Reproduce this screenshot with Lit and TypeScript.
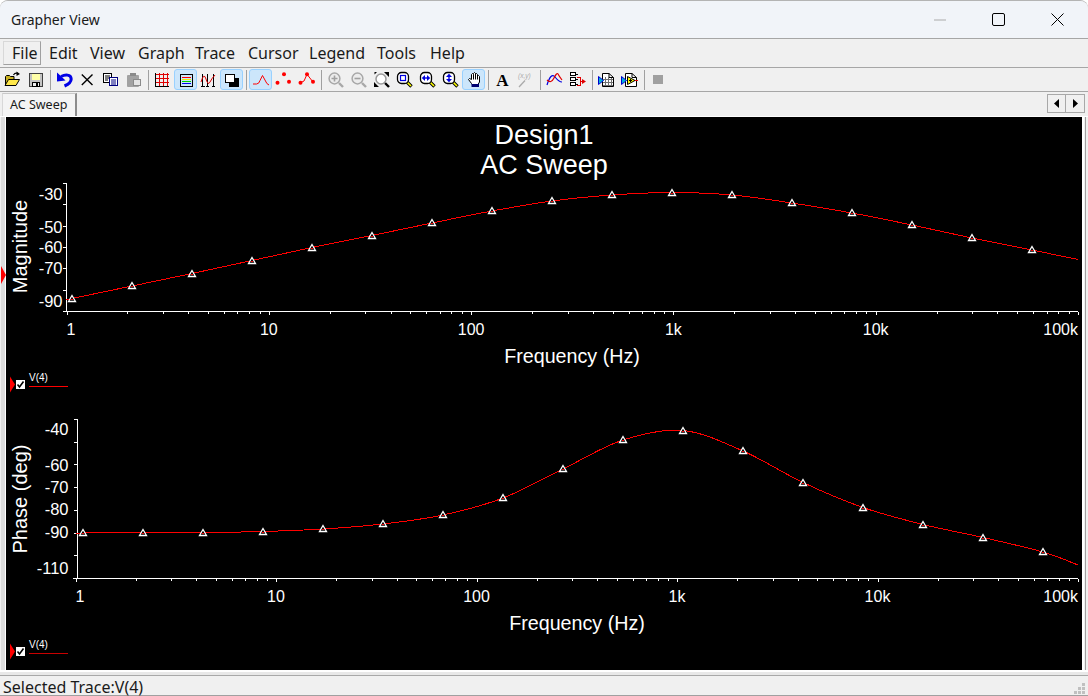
import { LitElement, html, css, svg } from "lit";
import { customElement } from "lit/decorators.js";

type Pt = [number, number];

const curve = (pts: Pt[]) => {
  let d = `M${pts[0][0]} ${pts[0][1]}`;
  for (let i = 0; i < pts.length - 1; i++) {
    const p0 = pts[Math.max(i - 1, 0)], p1 = pts[i], p2 = pts[i + 1], p3 = pts[Math.min(i + 2, pts.length - 1)];
    d += ` C${p1[0] + (p2[0] - p0[0]) / 6} ${p1[1] + (p2[1] - p0[1]) / 6} ${p2[0] - (p3[0] - p1[0]) / 6} ${p2[1] - (p3[1] - p1[1]) / 6} ${p2[0]} ${p2[1]}`;
  }
  return d;
};

const DOC = svg`<path d="M4.5 2.5H11L15.5 6.5V15.5H4.5Z" fill="#fff" stroke="#000"/><path d="M11 2.5V6.5H15.5" fill="none" stroke="#000"/>`;
const TRI = svg`<path d="M.5 5.5V13.5L5.5 9.5Z" fill="#00b4d8" stroke="#0000d0"/>`;
const LENS = svg`<path d="M11 11L15.5 15.5" stroke="#000" stroke-width="3.4"/><path d="M11.5 11.5L15 15" stroke="#ffff00" stroke-width="1.6"/><rect x="1.5" y="1.5" width="11" height="11" rx="4" fill="#fff" stroke="#000" stroke-width="1.3"/>`;

const ICONS: Record<string, unknown> = {
  open: svg`<path d="M1.5 14V5.5L2.5 4.5H5.5L6.5 5.5H10V8" fill="#c8b020" stroke="#000"/><path d="M1 14.5L4.5 8.5H15.5L12 14.5Z" fill="#ffe84a" stroke="#000"/><path d="M9.5 4Q11 1.5 14 2.5" fill="none" stroke="#000" stroke-width="1.2"/><path d="M12.5 .5L16 3L12.5 5Z"/>`,
  save: svg`<rect x="2.5" y="2.5" width="13" height="13" fill="#c4c4c4" stroke="#404040"/><rect x="5" y="3" width="8" height="6" fill="#ffffa8"/><rect x="5.5" y="11.5" width="7" height="4" fill="#eee" stroke="#000"/><rect x="9" y="12" width="2" height="3"/>`,
  undo: svg`<path d="M5 5.5C9 3.5 15 3 15.2 8C15.2 11.5 12 13.5 8.5 15" fill="none" stroke="#0000e6" stroke-width="3"/><path d="M1 1.5V10.5L9.5 9.5Z" fill="#0000e6"/>`,
  cut: svg`<path d="M2.8 3.5L13.5 14M13.5 3.5L2.8 14" fill="none" stroke="#000" stroke-width="1.4"/>`,
  copy: svg`<rect x="1.5" y="2.5" width="8" height="9" fill="#fff" stroke="#000"/><path d="M3 5H8M3 7H8M3 9H6" stroke="#000"/><rect x="7.5" y="6.5" width="8" height="8" fill="#fff" stroke="#000080"/><path d="M9 9H14M9 11H14M9 13H14" stroke="#000080"/>`,
  paste: svg`<rect x="2" y="4" width="12" height="12" rx="1" fill="#a2a2a2"/><rect x="5" y="2" width="6" height="3" fill="#8a8a8a"/><rect x="8.5" y="8.5" width="7" height="6" fill="#e4e4e4" stroke="#8a8a8a"/>`,
  grid: svg`<g shape-rendering="crispEdges"><path d="M5.5 2V15M9.5 2V15M13.5 2V15M2 3.5H15M2 7.5H15M2 11.5H15" stroke="#e00000"/><path d="M1.5 2V15.5H15" fill="none" stroke="#000"/></g>`,
  legend: svg`<g shape-rendering="crispEdges"><rect x="3.5" y="3.5" width="12" height="12" fill="none" stroke="#000"/><path d="M5 6.5H14" stroke="#f00"/><path d="M5 8.5H14" stroke="#f0f000"/><path d="M5 10.5H14" stroke="#00d000"/><path d="M5 12.5H14" stroke="#0000f0"/></g>`,
  traces: svg`<g shape-rendering="crispEdges"><path d="M2.5 3V15M7.5 3V15M13.5 3V15M1 15.5H5M6 15.5H9M12 15.5H15" stroke="#000"/></g><path d="M1 11Q4 1 6 8T10 11T15 4" fill="none" stroke="#e00000"/>`,
  invert: svg`<g shape-rendering="crispEdges"><rect x="6" y="7" width="10" height="9"/><rect x="2.5" y="3.5" width="9" height="8" fill="#fff" stroke="#000"/></g>`,
  peak: svg`<path d="M1 13H4.5Q7 13 8 9.5L10.5 4.5L13.5 10Q14.5 13 17 14" fill="none" stroke="#f00"/>`,
  dots: svg`<g fill="#f00"><circle cx="2.5" cy="11.7" r="2"/><circle cx="9" cy="3.3" r="2"/><circle cx="14" cy="10.8" r="2"/></g>`,
  peakdots: svg`<path d="M2.5 11.7L6 10L9 3.3L15 11" fill="none" stroke="#f00"/><g fill="#f00"><circle cx="2.5" cy="11.7" r="2"/><circle cx="9" cy="3.3" r="2"/><circle cx="15" cy="10.8" r="2"/></g>`,
  zin: svg`<path d="M12 12L16 16" stroke="#a8a8a8" stroke-width="2.4"/><circle cx="7.5" cy="7.5" r="5.4" fill="#ececec" stroke="#a8a8a8" stroke-width="1.5"/><path d="M4.5 7.5H10.5M7.5 4.5V10.5" stroke="#a0a0a0" stroke-width="1.6"/>`,
  zout: svg`<path d="M12 12L16 16" stroke="#a8a8a8" stroke-width="2.4"/><circle cx="7.5" cy="7.5" r="5.4" fill="#ececec" stroke="#a8a8a8" stroke-width="1.5"/><path d="M4.5 7.5H10.5" stroke="#a0a0a0" stroke-width="1.6"/>`,
  zfit: svg`<path d="M11 1H16V6ZM1 11V16H6ZM1.5 1H4L1.5 3.5Z"/><path d="M12 12L16 16" stroke="#000" stroke-width="2.4"/><circle cx="8" cy="8" r="5" fill="#fff" stroke="#999" stroke-width="1.5"/>`,
  zbox: svg`${LENS}<rect x="4.5" y="4.5" width="5" height="5" fill="none" stroke="#0000e0" stroke-width="1.2"/>`,
  zh: svg`${LENS}<path d="M5 7H9" stroke="#0000e0" stroke-width="1.4"/><path d="M6 4V10L2.8 7ZM8 4V10L11.2 7Z" fill="#0000e0"/>`,
  zv: svg`${LENS}<path d="M7 5V9" stroke="#0000e0" stroke-width="1.4"/><path d="M4 6H10L7 2.8ZM4 8H10L7 11.2Z" fill="#0000e0"/>`,
  hand: svg`<path d="M6.5 12.5L3.5 8.5L4.5 7.5L6.5 8.5V3.5L7.5 2.5L8.5 3.5V2.5L9.5 1.5L10.5 2.5V3.5L11.5 2.5L12.5 3.5V5L13.5 4.5L14.5 5.5V11L13 13.5H7Z" fill="#fff" stroke="#000"/><path d="M8.5 3.5V8.5M10.5 2.5V8.5M12.5 4V8.5" stroke="#000" fill="none"/><rect x="6.5" y="13" width="7.5" height="3" fill="#000070"/>`,
  text: svg`<text class="gA" x="8.5" y="14.5" text-anchor="middle">A</text>`,
  xy: svg`<text class="gxy" x="1" y="6.5">(x,y)</text><path d="M2 16L8 9.5" stroke="#aaa" stroke-width="1.3"/>`,
  wave: svg`<path d="M1 14Q5 1 9 6T16 11" fill="none" stroke="#0000e0" stroke-width="1.2"/><path d="M1 9Q5 13 8 7T12 3T16 9" fill="none" stroke="#e00000" stroke-width="1.2"/>`,
  merge: svg`<g shape-rendering="crispEdges"><rect x="1.5" y="1.5" width="5" height="3" fill="#fff" stroke="#000"/><rect x="1.5" y="6.5" width="5" height="3" fill="#fff" stroke="#000"/><rect x="1.5" y="11.5" width="5" height="3" fill="#fff" stroke="#000"/><path d="M7 3H9M7 8H9M7 13H9" stroke="#000"/><path d="M8 6.5H11.5V14.5H8M11.5 10.5H14" fill="none" stroke="#e00000"/></g><path d="M13 8L17 10.5L13 13Z" fill="#e00000"/>`,
  griddoc: svg`${DOC}<g shape-rendering="crispEdges"><path d="M7.5 6V15M10.5 6V15M13.5 7V15M5 8.5H15M5 11.5H15M5 14H15" stroke="#707070"/></g>${TRI}`,
  opdoc: svg`${DOC}${TRI}<path d="M6.5 5.5V13.5L14 9.5Z" fill="#ffff00" stroke="#000"/><path d="M14 9.5H17" stroke="#e00000"/><path d="M8 9.5H11M9.5 8V11" stroke="#000"/>`,
  stop: svg`<rect x="3" y="4" width="10" height="9" fill="#a0a0a0"/>`,
};

const TOOLS: string[] = [
  "open", "save", "|", "undo", "cut", "copy", "paste", "|", "grid", "*legend", "traces", "*invert", "|",
  "*peak", "dots", "peakdots", "|", "zin", "zout", "zfit", "zbox", "zh", "zv", "*hand", "|", "text", "xy", "|",
  "wave", "merge", "|", "griddoc", "opdoc", "|", "stop",
];

const MENUS: [string, number][] = [["File", 38], ["Edit", 41], ["View", 48], ["Graph", 57], ["Trace", 53], ["Cursor", 61], ["Legend", 68], ["Tools", 53], ["Help", 48]];

const XL = ["1", "10", "100", "1k", "10k", "100k"];

interface Plot {
  x0: number; x1: number; axisX: number; top: number; bottom: number; step: number;
  yLabels: [string, number][]; yRight: number; xBase: number; yTitle: string; yTitleY: number;
  fx: number; fy: number; trace: Pt[]; marks: Pt[];
}

const PLOTS: Plot[] = [
  {
    x0: 66.5, x1: 1078, axisX: 66.5, top: 183.5, bottom: 311.5, step: 21.33,
    yLabels: [["-30", 200], ["-50", 232.5], ["-60", 253], ["-70", 274], ["-90", 306.5]], yRight: 62.5,
    xBase: 335, yTitle: "Magnitude", yTitleY: 246.5, fx: 572, fy: 363,
    trace: [[67, 300], [72, 298.5], [132, 286], [192, 273.5], [252, 260.5], [312, 247.5], [372, 235.5], [432, 223], [492, 211], [552, 201], [612, 195], [672, 192.5], [732, 195], [792, 203], [852, 213], [912, 225], [972, 238], [1032, 250], [1078, 259.5]],
    marks: [[72, 298.5], [132, 286], [192, 273.5], [252, 260.5], [312, 247.5], [372, 235.5], [432, 223], [492, 211], [552, 201], [612, 195], [672, 192.5], [732, 195], [792, 203], [852, 213], [912, 225], [972, 238], [1032, 250]],
  },
  {
    x0: 75.5, x1: 1078, axisX: 77.5, top: 419.5, bottom: 578.5, step: 22.71,
    yLabels: [["-40", 435], ["-60", 470.5], ["-70", 493], ["-80", 515], ["-90", 538], ["-110", 574]], yRight: 68.5,
    xBase: 602, yTitle: "Phase (deg)", yTitleY: 499, fx: 577, fy: 630,
    trace: [[77, 533], [83, 533], [143, 532.5], [203, 532.5], [263, 531.5], [323, 529], [383, 524], [443, 515], [503, 498], [563, 469], [623, 440], [683, 430.5], [743, 451], [803, 482.5], [863, 507.5], [923, 524.5], [983, 537.5], [1043, 552], [1078, 565]],
    marks: [[83, 533], [143, 532.5], [203, 532.5], [263, 531.5], [323, 529], [383, 524], [443, 515], [503, 498], [563, 469], [623, 440], [683, 430.5], [743, 451], [803, 482.5], [863, 507.5], [923, 524.5], [983, 537.5], [1043, 552]],
  },
];

const LEGENDS = [{ y: 376.5, label: 381, line: 386.5, box: 380, dim: false }, { y: 643.5, label: 648, line: 653.5, box: 647, dim: true }];

@customElement("app-root")
export class AppRoot extends LitElement {
  static styles = css`
    :host { display: block; width: 1088px; height: 696px; overflow: hidden; background: #fff; font-family: "Noto Sans", sans-serif; color: #1a1a1a; }
    .win { height: 696px; display: flex; flex-direction: column; position: relative; background: #f0f0f0; border-radius: 8px 8px 0 0; box-sizing: border-box; border-top: 1px solid #b4b4b4; border-bottom: 1px solid #a0a0a0; }
    .title { height: 37px; flex: none; display: flex; align-items: center; background: #f1f4f9; border-radius: 8px 8px 0 0; border-bottom: 1px solid #a6a6a6; padding-left: 11px; font-size: 14px; }
    .title span { flex: 1; }
    .wc { width: 59px; height: 37px; display: flex; align-items: center; justify-content: center; }
    .wc svg { display: block; }
    .wc.last { margin-right: 1px; }
    .menu { height: 28px; flex: none; display: flex; align-items: center; padding-left: 3px; border-bottom: 1px solid #a6a6a6; font-size: 16px; }
    .mi { box-sizing: border-box; height: 24px; padding-left: 8px; line-height: 23px; white-space: nowrap; border: 1px solid transparent; border-left-width: 0; }
    .mi.on { border: 1px solid; border-color: #d8d8d8 #a0a0a0 #a0a0a0 #d8d8d8; }
    .tools { height: 23px; flex: none; display: flex; align-items: center; padding-left: 1px; border-bottom: 1px solid #a6a6a6; }
    .tb { box-sizing: border-box; width: 23px; height: 21px; display: flex; align-items: center; justify-content: center; border: 1px solid transparent; border-radius: 3px; }
    .tb.on { background: #cce6fb; border-color: #99d1ff; }
    .tb svg { width: 17px; height: 17px; display: block; overflow: visible; }
    .sep { width: 6px; height: 20px; display: flex; justify-content: center; }
    .sep i { display: block; width: 1px; background: #a0a0a0; }
    .gA { font: bold 17px "Liberation Serif", serif; fill: #000; }
    .gxy { font: italic 6.5px "Liberation Sans", sans-serif; fill: #aaa; }
    .tabs { flex: none; display: flex; align-items: flex-start; justify-content: space-between; padding: 1px 3px 0 2px; border-bottom: 1px solid #fff; height: 23px; }
    .tab { box-sizing: border-box; width: 75px; height: 23px; padding-left: 7px; line-height: 21px; font-size: 12.5px; background: #f4f4f4; border-top: 1px solid #c8c8c8; border-left: 1px solid #d8d8d8; border-right: 2px solid #8c8c8c; }
    .nav { display: flex; margin-top: 1px; }
    .nb { box-sizing: border-box; width: 19px; height: 19px; border: 1px solid #a8a8a8; display: flex; align-items: center; justify-content: center; }
    .nb + .nb { margin-left: -1px; width: 20px; }
    .nb svg { display: block; }
    .body { height: 553px; flex: none; display: flex; background: #e4e4e4; position: relative; }
    .gutter { width: 6px; flex: none; }
    .gutter.l { background: linear-gradient(90deg, #f0f0f0 0 1px, #dcdcdc 1px 5px, #fff 5px); }
    .gutter.r { background: linear-gradient(90deg, #fff 0 2px, #f0f0f0 2px 3px, #a0a0a0 3px 4px, #f0f0f0 4px); }
    .marker { position: absolute; left: 1px; top: 149px; display: block; }
    .plot { width: 1076px; height: 553px; display: block; background: #000; flex: none; }
    .plot text { font-family: "Liberation Sans", Arial, sans-serif; fill: #fff; }
    .t1 { font-size: 27px; text-anchor: middle; }
    .t2 { font-size: 20px; }
    .fq { font-size: 19.7px; }
    .tk { font-size: 16px; }
    .ty { font-size: 16.5px; }
    .end { text-anchor: end; }
    .mid { text-anchor: middle; }
    .lg { font-size: 10px; }
    .foot { height: 6px; flex: none; border-top: 2px solid #fff; box-sizing: border-box; border-bottom: 1px solid #a8a8a8; background: #e8e8e8; }
    .status { flex: 1; display: flex; align-items: center; justify-content: space-between; padding: 0 1px 0 3px; font-size: 16px; line-height: 16px; }
    .status span { position: relative; top: 1px; }
    .grip { display: block; align-self: flex-end; margin-right: 1px; }
  `;

  private plot(p: Plot) {
    const dec = (p.x1 - p.x0) / 5;
    const xs = XL.map((_, i) => p.x0 + dec * i);
    const minor: number[] = [];
    for (let d = 0; d < 5; d++) for (let m = 2; m < 10; m++) minor.push(p.x0 + dec * (d + Math.log10(m)));
    const yt: number[] = [];
    for (let y = p.top; y <= p.bottom + 1; y += p.step) yt.push(Math.round(y - 0.5) + 0.5);
    return svg`
      <g shape-rendering="crispEdges" stroke="#fff" fill="none">
        <path d="M${p.axisX} ${p.top}V${p.bottom}"/>
        <path d="M${p.x0 - 3} ${p.bottom}H${p.x1}"/>
        ${yt.map((y) => svg`<path d="M${p.axisX - 4} ${y}H${p.axisX}"/>`)}
        ${xs.map((x) => svg`<path d="M${Math.round(x) + 0.5} ${p.bottom}v3.5"/>`)}
        ${minor.map((x) => svg`<path d="M${Math.round(x) + 0.5} ${p.bottom}v2"/>`)}
      </g>
      ${p.yLabels.map(([t, y]) => svg`<text class="ty end" x=${p.yRight} y=${y}>${t}</text>`)}
      ${XL.map((t, i) => t === "1"
        ? svg`<text class="tk" x=${xs[0]} y=${p.xBase}>${t}</text>`
        : t === "100k"
          ? svg`<text class="tk end" x=${p.x1} y=${p.xBase}>${t}</text>`
          : svg`<text class="tk mid" x=${xs[i]} y=${p.xBase}>${t}</text>`)}
      <text class="fq mid" x=${p.fx} y=${p.fy}>Frequency (Hz)</text>
      <text class="t2 mid" transform="translate(27 ${p.yTitleY}) rotate(-90)">${p.yTitle}</text>
      <path d=${curve(p.trace)} fill="none" stroke="#f00" shape-rendering="crispEdges"/>
      ${p.marks.map(([x, y]) => {
        const yy = Math.round(y);
        return svg`<path d="M${x} ${yy - 3.5}L${x + 3.5} ${yy + 2.5}H${x - 3.5}Z" fill="#000" stroke="#fff" stroke-width="1.3"/><rect x=${x - 1} y=${yy} width="2" height="1" fill="#f00"/>`;
      })}
    `;
  }

  render() {
    return html`
      <div class="win">
        <div class="title">
          <span>Grapher View</span>
          <div class="wc"><svg width="12" height="2"><path d="M0 1H12" stroke="#aaa"/></svg></div>
          <div class="wc"><svg width="13" height="13"><rect x=".5" y=".5" width="12" height="12" rx="1.5" fill="none" stroke="#000"/></svg></div>
          <div class="wc last"><svg width="13" height="13"><path d="M.5 .5L12.5 12.5M12.5 .5L.5 12.5" stroke="#000" fill="none"/></svg></div>
        </div>
        <div class="menu">
          ${MENUS.map(([m, w], i) => html`<div class="mi ${i === 0 ? "on" : ""}" style="width:${w}px">${m}</div>`)}
        </div>
        <div class="tools">
          ${TOOLS.map((t) => t === "|"
            ? html`<div class="sep"><i></i></div>`
            : html`<div class="tb ${t[0] === "*" ? "on" : ""}"><svg viewBox="0 0 17 17">${ICONS[t.replace("*", "")]}</svg></div>`)}
        </div>
        <div class="tabs">
          <div class="tab">AC Sweep</div>
          <div class="nav">
            <div class="nb"><svg width="6" height="9"><path d="M5 0V9L0 4.5Z"/></svg></div>
            <div class="nb"><svg width="6" height="9"><path d="M1 0V9L6 4.5Z"/></svg></div>
          </div>
        </div>
        <div class="body">
          <div class="gutter l"></div>
          <svg class="marker" width="5" height="18"><path d="M0 0L5 9L0 18Z" fill="#f00"/></svg>
          <svg class="plot" viewBox="6 117 1076 553">
            <text class="t1" x="544" y="144">Design1</text>
            <text class="t1" x="544" y="174">AC Sweep</text>
            ${PLOTS.map((p) => this.plot(p))}
            ${LEGENDS.map((l) => svg`
              <path d="M10 ${l.y}L15 ${l.y + 8}L10 ${l.y + 16}Z" fill="#f00"/>
              <rect x="16" y=${l.box} width="9" height="9" fill="#fff"/>
              <path d="M17.5 ${l.box + 4.5}L19.5 ${l.box + 7}L23.5 ${l.box + 1.5}" fill="none" stroke="#000" stroke-width="1.6"/>
              <text class="lg" x="29" y=${l.label}>V(4)</text>
              <path d="M29 ${l.line}H68" stroke=${l.dim ? "#c80000" : "#f00"} shape-rendering="crispEdges"/>
            `)}
          </svg>
          <div class="gutter r"></div>
        </div>
        <div class="foot"></div>
        <div class="status">
          <span>Selected Trace:V(4)</span>
          <svg class="grip" width="12" height="12"><g fill="#c0c0c0"><rect x="8" y="0" width="3" height="3"/><rect x="4" y="4" width="3" height="3"/><rect x="8" y="4" width="3" height="3"/><rect x="0" y="8" width="3" height="3"/><rect x="4" y="8" width="3" height="3"/><rect x="8" y="8" width="3" height="3"/></g></svg>
        </div>
      </div>
    `;
  }
}
